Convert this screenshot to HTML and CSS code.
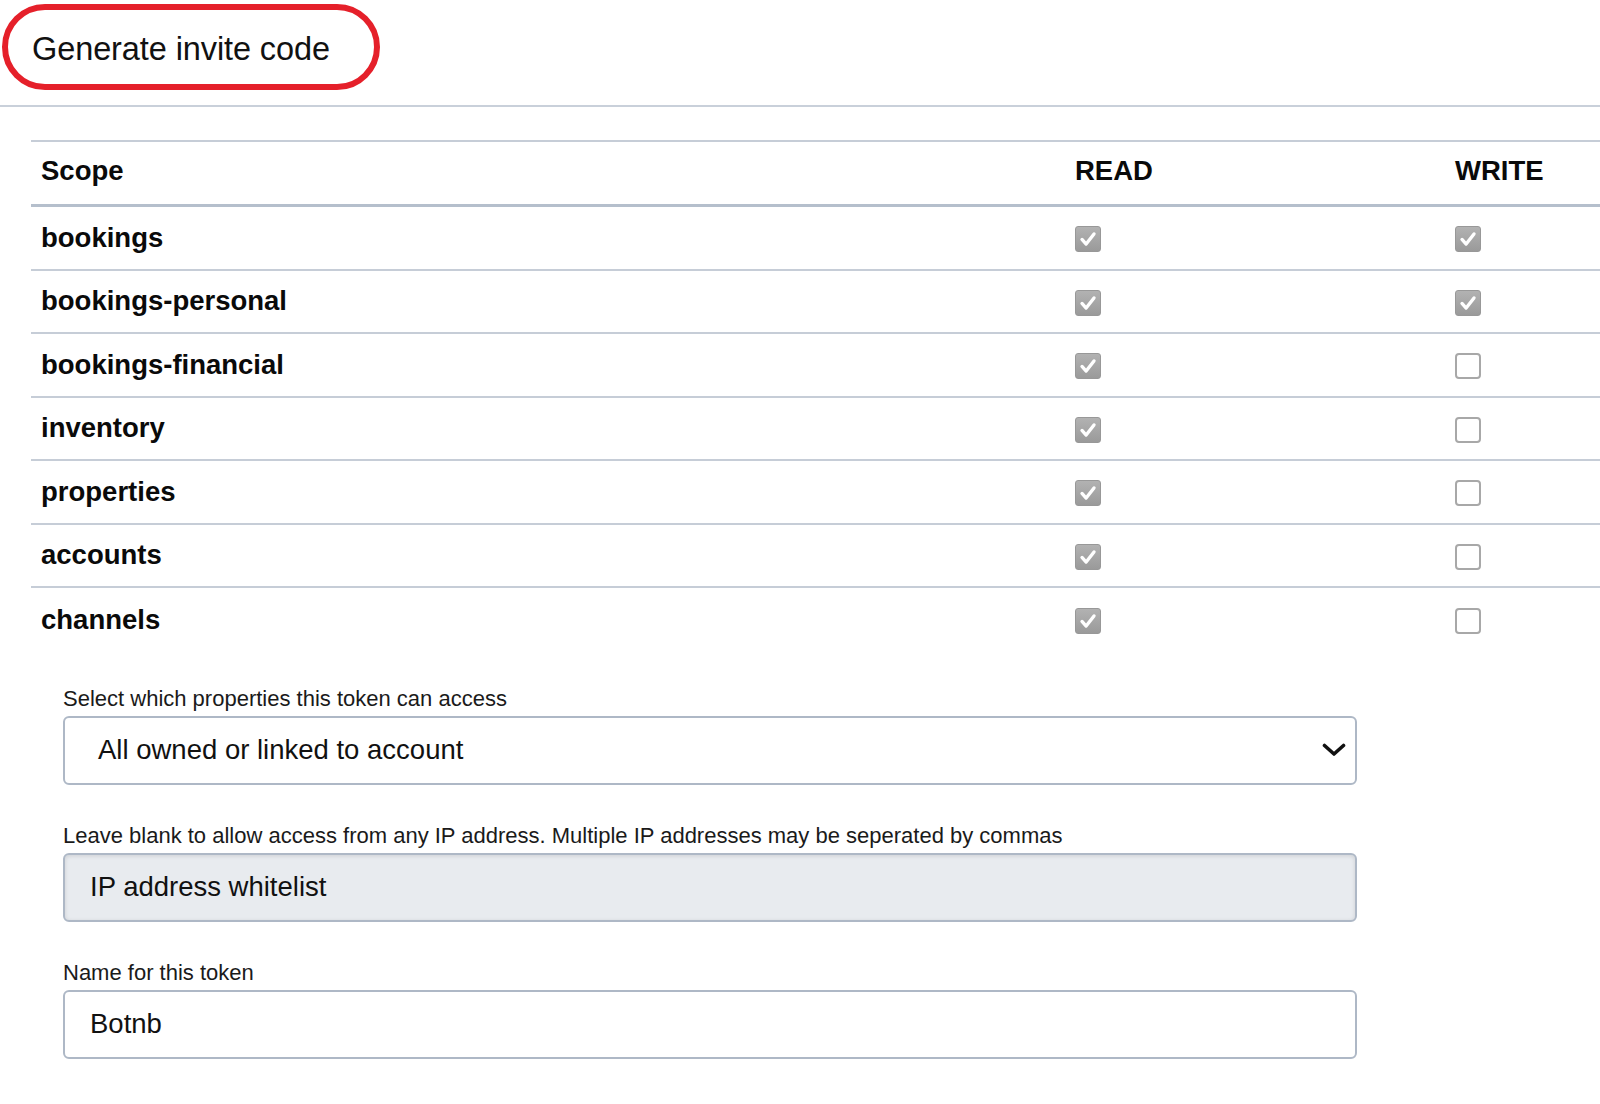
FILE: index.html
```html
<!DOCTYPE html>
<html lang="en">
<head>
<meta charset="utf-8">
<title>Generate invite code</title>
<link rel="stylesheet" href="styles.css">
</head>
<body>
<div class="page">
  <header class="topbar">
    <div class="invite">Generate invite code</div>
  </header>

  <section class="scopes">
    <div class="row head">
      <div class="cell">Scope</div>
      <div class="cell">READ</div>
      <div class="cell">WRITE</div>
    </div>
    <div class="row">
      <div class="cell name">bookings</div>
      <div class="cell"><span class="cb on"><svg viewBox="0 0 26 26"><path d="M6.5 13.5 L11 18.5 L19.5 7.5"/></svg></span></div>
      <div class="cell"><span class="cb on"><svg viewBox="0 0 26 26"><path d="M6.5 13.5 L11 18.5 L19.5 7.5"/></svg></span></div>
    </div>
    <div class="row">
      <div class="cell name">bookings-personal</div>
      <div class="cell"><span class="cb on"><svg viewBox="0 0 26 26"><path d="M6.5 13.5 L11 18.5 L19.5 7.5"/></svg></span></div>
      <div class="cell"><span class="cb on"><svg viewBox="0 0 26 26"><path d="M6.5 13.5 L11 18.5 L19.5 7.5"/></svg></span></div>
    </div>
    <div class="row">
      <div class="cell name">bookings-financial</div>
      <div class="cell"><span class="cb on"><svg viewBox="0 0 26 26"><path d="M6.5 13.5 L11 18.5 L19.5 7.5"/></svg></span></div>
      <div class="cell"><span class="cb"></span></div>
    </div>
    <div class="row">
      <div class="cell name">inventory</div>
      <div class="cell"><span class="cb on"><svg viewBox="0 0 26 26"><path d="M6.5 13.5 L11 18.5 L19.5 7.5"/></svg></span></div>
      <div class="cell"><span class="cb"></span></div>
    </div>
    <div class="row">
      <div class="cell name">properties</div>
      <div class="cell"><span class="cb on"><svg viewBox="0 0 26 26"><path d="M6.5 13.5 L11 18.5 L19.5 7.5"/></svg></span></div>
      <div class="cell"><span class="cb"></span></div>
    </div>
    <div class="row">
      <div class="cell name">accounts</div>
      <div class="cell"><span class="cb on"><svg viewBox="0 0 26 26"><path d="M6.5 13.5 L11 18.5 L19.5 7.5"/></svg></span></div>
      <div class="cell"><span class="cb"></span></div>
    </div>
    <div class="row last">
      <div class="cell name">channels</div>
      <div class="cell"><span class="cb on"><svg viewBox="0 0 26 26"><path d="M6.5 13.5 L11 18.5 L19.5 7.5"/></svg></span></div>
      <div class="cell"><span class="cb"></span></div>
    </div>
  </section>

  <form class="form">
    <div class="field">
      <label class="label">Select which properties this token can access</label>
      <div class="box select">
        <span>All owned or linked to account</span>
        <svg class="chev" viewBox="0 0 24 14"><polyline points="2.5,2.5 12,11 21.5,2.5"/></svg>
      </div>
    </div>
    <div class="field">
      <label class="label">Leave blank to allow access from any IP address. Multiple IP addresses may be seperated by commas</label>
      <div class="box ip"><span>IP address whitelist</span></div>
    </div>
    <div class="field">
      <label class="label">Name for this token</label>
      <div class="box name-input"><span>Botnb</span></div>
    </div>
  </form>
</div>
</body>
</html>
```
FILE: styles.css
```css
* { box-sizing: border-box; }

html, body {
  margin: 0;
  padding: 0;
  background: #ffffff;
}

body {
  font-family: "Liberation Sans", Arial, sans-serif;
  color: #111;
}

.page {
  width: 1600px;
}

.topbar {
  height: 107px;
  padding: 4px 0 0 2px;
  border-bottom: 2px solid #c9d0da;
}

.invite {
  width: 378px;
  height: 86px;
  border: 6.5px solid #e5202a;
  border-radius: 43px;
  padding: 4px 0 0 24px;
  font-size: 32.5px;
  line-height: 70px;
  color: #111;
  letter-spacing: -0.1px;
}

.scopes {
  margin: 33px 0 0 31px;
  border-top: 2px solid #c6cdd7;
}

.row {
  display: grid;
  grid-template-columns: 1034px 380px 1fr;
  align-items: center;
  height: 63.5px;
  border-bottom: 2px solid #c6cdd7;
}

.row.head {
  height: 65px;
  border-bottom: 3px solid #b5bfcc;
}

.row.last {
  border-bottom: none;
}

.cell {
  padding-left: 10px;
  font-size: 27.5px;
  font-weight: bold;
  color: #0a0a0a;
  display: flex;
  align-items: center;
}

.row.head .cell {
  padding-bottom: 4px;
}

.cb {
  display: block;
  width: 26px;
  height: 26px;
  border: 2px solid #a8a8a8;
  border-radius: 4px;
  background: #fff;
  margin-top: 3px;
}

.cb.on {
  border: 1px solid #989898;
  background: linear-gradient(#b2b2b2, #9a9a9a);
  border-radius: 3px;
}

.cb svg {
  display: block;
  width: 24px;
  height: 24px;
}

.cb svg path {
  fill: none;
  stroke: #ffffff;
  stroke-width: 3.6;
  stroke-linecap: round;
  stroke-linejoin: round;
}

.form {
  margin-top: 34px;
  padding-left: 63px;
}

.field {
  margin-bottom: 38px;
}

.label {
  display: block;
  font-size: 22px;
  line-height: 26px;
  color: #1a1a1a;
  margin-bottom: 4px;
}

.box {
  width: 1294px;
  height: 69px;
  border: 2px solid #aeb8c6;
  border-radius: 6px;
  display: flex;
  align-items: center;
  font-size: 27.5px;
  color: #111;
}

.select {
  padding-left: 33px;
  padding-right: 9px;
  justify-content: space-between;
  background: #fff;
}

.chev {
  width: 24px;
  height: 14px;
}

.chev polyline {
  fill: none;
  stroke: #111;
  stroke-width: 3.6;
  stroke-linecap: round;
  stroke-linejoin: round;
}

.ip {
  padding-left: 25px;
  background: #e8ebef;
  box-shadow: inset 0 1px 4px rgba(0, 0, 0, 0.12);
}

.name-input {
  padding-left: 25px;
  background: #fff;
}
```
